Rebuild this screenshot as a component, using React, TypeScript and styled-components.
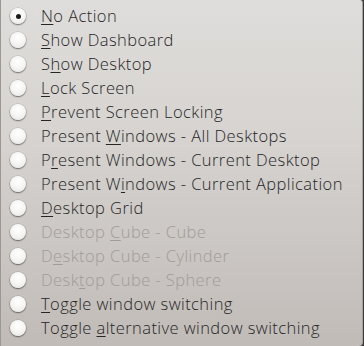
import React from "react";
import styled, { createGlobalStyle } from "styled-components";

type Action = {
  label: string;
  mnemonic: number;
  disabled?: boolean;
  checked?: boolean;
};

const actions: Action[] = [
  { label: "No Action", mnemonic: 0, checked: true },
  { label: "Show Dashboard", mnemonic: 0 },
  { label: "Show Desktop", mnemonic: 1 },
  { label: "Lock Screen", mnemonic: 0 },
  { label: "Prevent Screen Locking", mnemonic: 0 },
  { label: "Present Windows - All Desktops", mnemonic: 8 },
  { label: "Present Windows - Current Desktop", mnemonic: 1 },
  { label: "Present Windows - Current Application", mnemonic: 9 },
  { label: "Desktop Grid", mnemonic: 0 },
  { label: "Desktop Cube - Cube", mnemonic: 8, disabled: true },
  { label: "Desktop Cube - Cylinder", mnemonic: 1, disabled: true },
  { label: "Desktop Cube - Sphere", mnemonic: 4, disabled: true },
  { label: "Toggle window switching", mnemonic: 0 },
  { label: "Toggle alternative window switching", mnemonic: 7 },
];

export default function App() {
  return (
    <>
      <GlobalStyle />
      <Menu>
        {actions.map((a) => (
          <Row key={a.label} $disabled={a.disabled}>
            <Radio>{a.checked && <Dot />}</Radio>
            <Label>
              {a.label.slice(0, a.mnemonic)}
              <Mnemonic>{a.label[a.mnemonic]}</Mnemonic>
              {a.label.slice(a.mnemonic + 1)}
            </Label>
          </Row>
        ))}
      </Menu>
    </>
  );
}

const GlobalStyle = createGlobalStyle`
  * {
    box-sizing: border-box;
  }
  body, html, #root {
    margin: 0;
    padding: 0;
    background: #3a3a3a;
    font-family: "Open Sans", "Noto Sans", sans-serif;
  }
`;

const Menu = styled.div`
  width: 363px;
  height: 346px;
  padding-top: 4px;
  display: flex;
  flex-direction: column;
  background: linear-gradient(to bottom, #dfdddb 0%, #d6d3d0 40%, #c0bbb7 100%);
  border-left: 1px solid #9a9794;
  border-right: 1px solid #a6a29e;
  border-radius: 0 3px 4px 0;
`;

const Row = styled.div<{ $disabled?: boolean }>`
  height: 24px;
  display: flex;
  align-items: center;
  padding-left: 9px;
  gap: 15px;
  color: ${({ $disabled }) => ($disabled ? "#a19c98" : "#262626")};
  font-size: 16.5px;
  font-weight: 300;
  letter-spacing: 0.42px;
`;

const Radio = styled.span`
  width: 16px;
  height: 16px;
  border-radius: 50%;
  flex-shrink: 0;
  display: flex;
  align-items: center;
  justify-content: center;
  background: radial-gradient(circle at 50% 35%, #ffffff 0%, #f6f5f4 50%, #e4e2e0 100%);
  box-shadow: 0 1px 1.5px rgba(0, 0, 0, 0.45), 0 0 0 0.6px rgba(0, 0, 0, 0.2);
`;

const Dot = styled.span`
  width: 5px;
  height: 5px;
  border-radius: 50%;
  background: #1a1a1a;
`;

const Label = styled.span`
  white-space: nowrap;
  line-height: 24px;
`;

const Mnemonic = styled.span`
  text-decoration: underline;
  text-decoration-thickness: 1px;
  text-underline-offset: 2px;
`;
